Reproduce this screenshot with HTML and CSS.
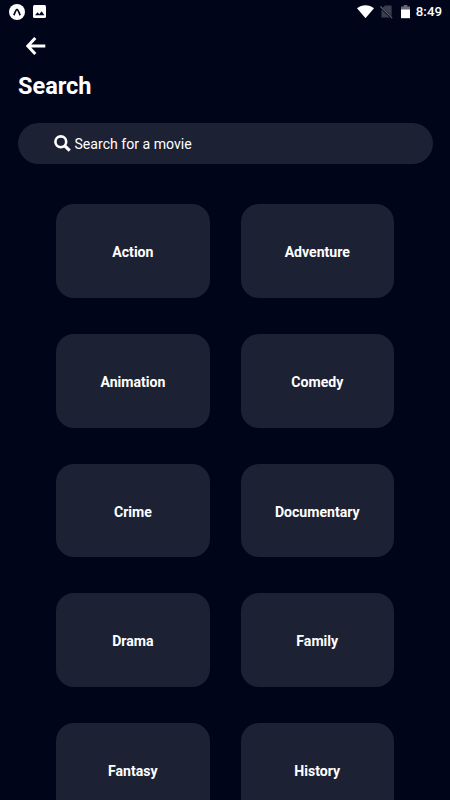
FILE: index.html
```html
<!DOCTYPE html>
<html lang="en">
<head>
<meta charset="utf-8">
<title>Search</title>
<link rel="stylesheet" href="styles.css">
</head>
<body>
<div class="statusbar">
  <svg class="app" viewBox="0 0 16 16"><circle cx="8" cy="8" r="8" fill="#fff"/><path d="M4.8 11.2C6 9.2 6.7 5.4 8 5.4s2 3.8 3.2 5.8" fill="none" stroke="#01051a" stroke-width="1.7"/></svg>
  <svg class="photo" viewBox="0 0 13 13"><rect width="13" height="13" rx="1.5" fill="#fff"/><path d="M2 10.3 4.6 7.2l1.7 2 2.3-3L11.4 10.3z" fill="#01051a"/></svg>
  <svg class="wifi" viewBox="0 0 17 13"><path d="M0 3.3C5-.9 12-.9 17 3.3L8.5 13.2z" fill="#fff"/></svg>
  <svg class="sim" viewBox="0 0 13 14"><path d="M5 .5h6.6v12H1.5V4z" fill="#3b3e4e"/><path d="M.5 2 12.5 13.6" stroke="#01051a" stroke-width="2.2"/><path d="M.4 1.4 12.2 13.2" stroke="#666875" stroke-width="1.1"/></svg>
  <svg class="battery" viewBox="0 0 9 14"><path d="M2.7 0h3.6v1.4H9V5H0V1.4h2.7z" fill="#666875"/><path d="M0 4.5h9v8.7H0z" fill="#fff"/></svg>
  <span class="clock">8:49</span>
</div>
<svg class="back" viewBox="0 0 20 18"><path d="M9.3 1 1.8 9l7.5 8M2 9H19.3" fill="none" stroke="#fff" stroke-width="3"/></svg>
<h1>Search</h1>
<div class="search">
  <svg class="glass" viewBox="0 0 17 17"><circle cx="6.8" cy="6.8" r="5.4" fill="none" stroke="#fff" stroke-width="2.6"/><path d="m10.8 10.8 4.9 4.9" stroke="#fff" stroke-width="3.2"/></svg>
  <span>Search for a movie</span>
</div>
<div class="grid">
  <div class="card">Action</div>
  <div class="card">Adventure</div>
  <div class="card">Animation</div>
  <div class="card">Comedy</div>
  <div class="card">Crime</div>
  <div class="card">Documentary</div>
  <div class="card">Drama</div>
  <div class="card">Family</div>
  <div class="card">Fantasy</div>
  <div class="card">History</div>
</div>
</body>
</html>
```
FILE: styles.css
```css
* { box-sizing: border-box; }
body {
  margin: 0;
  height: 800px;
  overflow: hidden;
  background: #01051a;
  color: #fff;
  font-family: Roboto, sans-serif;
}
svg { display: block; flex: none; }
.statusbar {
  display: flex;
  align-items: center;
  height: 23px;
  padding: 0 8px 0 9px;
}
.app { width: 16px; height: 16px; }
.photo { width: 13px; height: 13px; margin-left: 8px; }
.wifi { width: 17px; height: 13px; margin-left: auto; }
.sim { width: 13px; height: 14px; margin-left: 6px; }
.battery { width: 9px; height: 14px; margin-left: 8px; }
.clock {
  margin-left: 6px;
  font-size: 13.3px;
  font-weight: 500;
  line-height: 23px;
}
.back { width: 20px; height: 18px; margin: 14px 0 0 26px; }
h1 {
  margin: 17px 0 0 18px;
  font-size: 23.5px;
  font-weight: 700;
  line-height: 28px;
}
.search {
  display: flex;
  align-items: center;
  height: 41px;
  margin: 23px 17px 0 18px;
  padding-left: 35.5px;
  border-radius: 21px;
  background: #1d2134;
  font-size: 14.1px;
}
.glass { width: 17px; height: 17px; margin: -1px 4px 0 0; }
.grid {
  display: grid;
  grid-template-columns: repeat(2, 153.4px);
  grid-auto-rows: 93.7px;
  gap: 36px 31px;
  margin: 40.4px 0 0 56.2px;
}
.card {
  display: flex;
  align-items: center;
  justify-content: center;
  padding-top: 2px;
  border-radius: 18px;
  background: #1d2134;
  font-size: 14.1px;
  font-weight: 700;
}
```
